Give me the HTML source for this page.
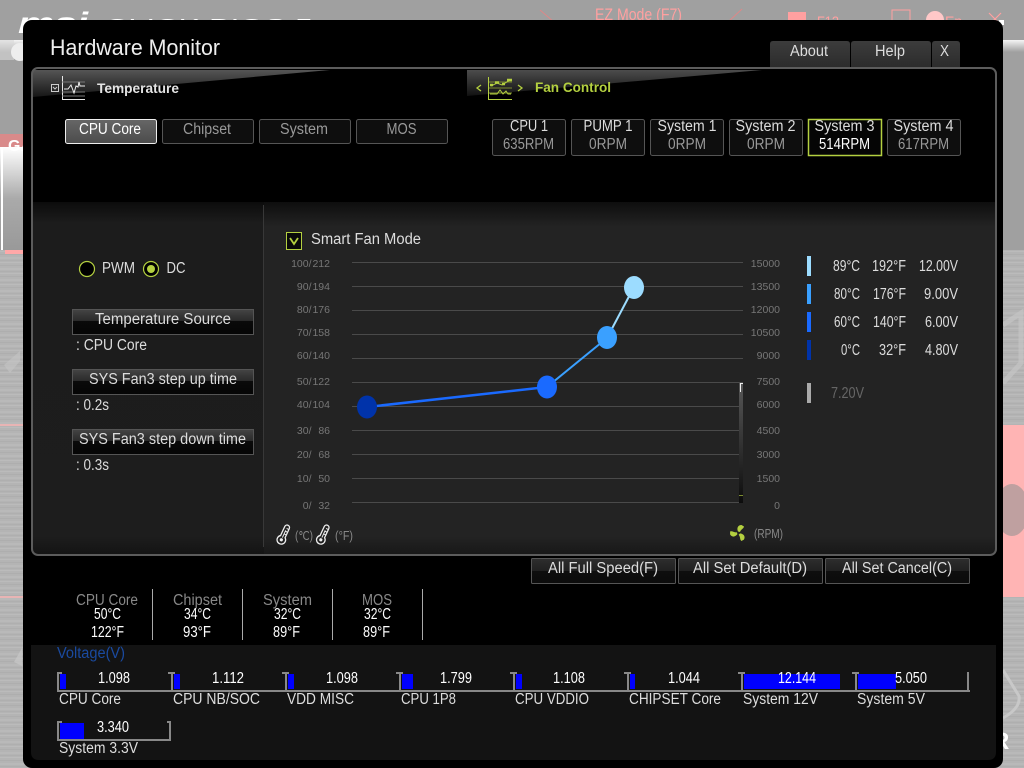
<!DOCTYPE html>
<html lang="en"><head><meta charset="utf-8"><title>Hardware Monitor</title>
<style>
html,body{margin:0;padding:0;width:1024px;height:768px;overflow:hidden;background:#a0a0a0}
svg{display:block}
text{font-family:"Liberation Sans",sans-serif;font-size:15.5px;fill:#ddd}
.g{fill:#999}.w{fill:#fff}.a{font-size:10.5px;fill:#777;text-anchor:end}
.leg{font-size:16px;fill:#ddd}
</style></head><body>
<svg xmlns="http://www.w3.org/2000/svg" width="1024" height="768" viewBox="0 0 1024 768">
<defs>
<linearGradient id="band" x1="0" y1="0" x2="0" y2="1"><stop offset="0" stop-color="#f4f4f4"/><stop offset="1" stop-color="#a0a0a0"/></linearGradient>
<linearGradient id="box" x1="0" y1="0" x2="0" y2="1"><stop offset="0" stop-color="#fff"/><stop offset=".5" stop-color="#aaa"/><stop offset="1" stop-color="#999"/></linearGradient>
<pattern id="st" width="8" height="11" patternUnits="userSpaceOnUse"><rect width="8" height="11" fill="#b4b4b4"/><rect y="1" width="8" height="1" fill="#aeaeae"/><rect y="4" width="8" height="2" fill="#b9b9b9"/><rect y="7" width="8" height="1" fill="#afafaf"/><rect y="9" width="8" height="1" fill="#bbb"/></pattern>
<linearGradient id="wedge" x1="0" y1="0" x2="0" y2="1"><stop offset="0" stop-color="#555"/><stop offset="1" stop-color="#161616"/></linearGradient>
<linearGradient id="wedge2" x1="0" y1="0" x2="0" y2="1"><stop offset="0" stop-color="#4c4c4c"/><stop offset="1" stop-color="#111"/></linearGradient>
<linearGradient id="sel" x1="0" y1="0" x2="0" y2="1"><stop offset="0" stop-color="#666"/><stop offset="1" stop-color="#4c4c4c"/></linearGradient>
<linearGradient id="tab" x1="0" y1="0" x2="0" y2="1"><stop offset="0" stop-color="#3c3c3c"/><stop offset="1" stop-color="#2c2c2c"/></linearGradient>
<linearGradient id="btn" x1="0" y1="0" x2="0" y2="1"><stop offset="0" stop-color="#444"/><stop offset=".46" stop-color="#2a2a2a"/><stop offset=".47" stop-color="#0a0a0a"/><stop offset="1" stop-color="#050505"/></linearGradient>
<linearGradient id="btn2" x1="0" y1="0" x2="0" y2="1"><stop offset="0" stop-color="#2e2e2e"/><stop offset=".5" stop-color="#202020"/><stop offset=".51" stop-color="#0e0e0e"/><stop offset="1" stop-color="#0b0b0b"/></linearGradient>
<linearGradient id="lp" x1="0" y1="0" x2="0" y2="1"><stop offset="0" stop-color="#0c0c0c"/><stop offset=".06" stop-color="#1c1c1c"/><stop offset=".95" stop-color="#1d1d1d"/><stop offset="1" stop-color="#141414"/></linearGradient>
<linearGradient id="rp" x1="0" y1="0" x2="0" y2="1"><stop offset="0" stop-color="#0e0e0e"/><stop offset=".07" stop-color="#232323"/><stop offset=".95" stop-color="#232323"/><stop offset="1" stop-color="#181818"/></linearGradient>
<linearGradient id="sl" x1="0" y1="0" x2="0" y2="1"><stop offset="0" stop-color="#585858"/><stop offset=".5" stop-color="#333"/><stop offset="1" stop-color="#0c0c0c"/></linearGradient>
</defs>

<!-- background -->
<rect width="1024" height="768" fill="#a0a0a0"/>
<rect y="40" width="1024" height="12" fill="url(#band)"/>
<rect y="250" width="1024" height="518" fill="url(#st)"/>
<rect y="134" width="23" height="13" fill="#d98a8a"/>
<rect y="147" width="23" height="103" fill="url(#box)"/>
<rect y="147" x="1" width="2" height="103" fill="#fff"/>
<rect x="5" y="250" width="18" height="4" fill="#ffa8a8"/>
<rect y="424" width="23" height="2" fill="#e8b4b4"/>
<rect y="596" width="23" height="2" fill="#e8b4b4"/>
<path d="M4 365l16-14v10l-10 12z" fill="#c4c4c4" opacity=".6"/>
<path d="M14 662l8-14v18z" fill="#c8c8c8" opacity=".7"/>
<text x="8" y="151" style="font-size:16px;font-weight:bold;fill:#fff">GA</text>
<rect x="1003" y="425" width="21" height="172" fill="#ffb4b4"/>
<ellipse cx="1012" cy="510" rx="17" ry="26" fill="#a99" opacity=".75"/>
<path d="M1003 325l18-12v50l-18 20" stroke="#c4c4c4" stroke-width="5" fill="none" opacity=".7"/>
<path d="M1003 670l16 26q2 12-16 22" stroke="#c8c8c8" stroke-width="3" fill="none"/>
<text x="992" y="749" style="font-size:24px;font-weight:bold;fill:#fff">R</text>
<rect x="0" y="40" width="14" height="20" fill="#d8d8d8" opacity=".6"/>
<circle cx="20" cy="52" r="9" fill="#eee"/>

<!-- top header, clipped by the dialog -->
<text x="18" y="33" textLength="70" lengthAdjust="spacingAndGlyphs" style="font-size:30px;font-weight:bold;font-style:italic;fill:#fff">msi</text>
<text x="105" y="33" textLength="208" lengthAdjust="spacingAndGlyphs" style="font-size:20px;fill:#fff">CLICK BIOS 5</text>
<text x="595" y="20" textLength="87" lengthAdjust="spacingAndGlyphs" style="font-size:17px;fill:#ffa0a0">EZ Mode (F7)</text>
<path d="M540 10l14 12M742 9l-14 13" stroke="#d88" stroke-width="1" fill="none"/>
<rect x="788" y="12" width="18" height="10" fill="#ffa0a0"/>
<text x="817" y="26" textLength="22" lengthAdjust="spacingAndGlyphs" style="font-size:14px;fill:#ffa0a0">F12</text>
<rect x="892" y="10" width="18" height="12" fill="none" stroke="#ffa0a0"/>
<circle cx="935" cy="20" r="9" fill="#ffc8c8"/>
<text x="945" y="26" style="font-size:14px;fill:#ffa0a0">En</text>
<path d="M989 13l12 12M1001 13l-12 12" stroke="#ffa0a0" stroke-width="1.2"/>

<!-- dialog -->
<rect x="999" y="20" width="5" height="5" fill="#fff"/>
<rect x="23" y="20" width="980" height="748" rx="9" fill="#000"/>
<text x="50" y="55" textLength="170" lengthAdjust="spacingAndGlyphs" style="font-size:22px;fill:#eee">Hardware Monitor</text>

<!-- tabs -->
<path d="M770 67V44q0-3 3-3h74q3 0 3 3v23z" fill="url(#tab)"/>
<path d="M851 67V44q0-3 3-3h74q3 0 3 3v23z" fill="url(#tab)"/>
<path d="M932 67V44q0-3 3-3h22q3 0 3 3v23z" fill="url(#tab)"/>
<text x="790" y="56" textLength="38" lengthAdjust="spacingAndGlyphs">About</text>
<text x="875" y="56" textLength="30" lengthAdjust="spacingAndGlyphs">Help</text>
<text x="940" y="56" textLength="9" lengthAdjust="spacingAndGlyphs">X</text>

<!-- lower panel fills -->
<rect x="33" y="202" width="231" height="352" fill="url(#lp)"/>
<rect x="264" y="202" width="731" height="352" fill="url(#rp)"/>
<rect x="263" y="205" width="1" height="342" fill="#383838"/>

<!-- header wedges -->
<polygon points="33,70 330,70 33,97" fill="url(#wedge)"/>
<polygon points="467,70 762,70 467,96" fill="url(#wedge2)"/>

<!-- panel border -->
<rect x="32" y="68" width="964" height="487" rx="6" fill="none" stroke="#5c5c5c" stroke-width="2"/>

<!-- temperature tab -->
<rect x="51.500" y="84.500" width="7" height="7" fill="none" stroke="#ccc"/>
<path d="M53 87l2 2 2-2" stroke="#ccc" fill="none"/>
<path d="M62.500 76v23.500H85" stroke="#e8e8e8" fill="none"/>
<path d="M62 82h23M62 92h23M62 96h23" stroke="#777" fill="none"/>
<path d="M64 89h4l3-4 3 8 2-7 2 1 1-5 1 4h5" stroke="#eee" stroke-width="1" fill="none"/>
<text x="97" y="93" textLength="82" lengthAdjust="spacingAndGlyphs" style="font-size:14px;font-weight:bold;fill:#e4e4e4">Temperature</text>

<!-- fan tab -->
<path d="M481 85l-4 3 4 3" stroke="#b4d040" stroke-width="1.300" fill="none"/>
<path d="M488.500 77V99.500H512" stroke="#b4d040" fill="none"/>
<path d="M489 82h23M489 88h23M489 93h23" stroke="#7c8c30" fill="none"/>
<path d="M490 85h3M495 82.500h4M502 84h3M507 80h5" stroke="#b4d040" stroke-width="2.500" fill="none"/>
<path d="M491 86l6-3 5 2 8-5" stroke="#b4d040" stroke-width="1" fill="none"/>
<path d="M490 94h7l3-4 3 4 3-3 2 3h3" stroke="#b4d040" fill="none"/>
<path d="M518 85l4 3-4 3" stroke="#b4d040" stroke-width="1.300" fill="none"/>
<text x="535" y="92" textLength="76" lengthAdjust="spacingAndGlyphs" style="font-size:14px;font-weight:bold;fill:#b4d040">Fan Control</text>

<!-- sensor buttons -->
<rect x="65.500" y="119.500" width="91" height="24" rx="2" fill="url(#sel)" stroke="#eee"/>
<rect x="162.500" y="119.500" width="91" height="24" rx="2" fill="#0e0e0e" stroke="#555"/>
<rect x="259.500" y="119.500" width="91" height="24" rx="2" fill="#0e0e0e" stroke="#555"/>
<rect x="356.500" y="119.500" width="91" height="24" rx="2" fill="#0e0e0e" stroke="#555"/>
<text x="79" y="134" textLength="62" lengthAdjust="spacingAndGlyphs" class="w">CPU Core</text>
<text x="183" y="134" textLength="48" lengthAdjust="spacingAndGlyphs" class="g">Chipset</text>
<text x="280" y="134" textLength="48" lengthAdjust="spacingAndGlyphs" class="g">System</text>
<text x="386.500" y="134" textLength="30" lengthAdjust="spacingAndGlyphs" class="g">MOS</text>

<!-- fan buttons -->
<g fill="#0e0e0e" stroke="#555">
<rect x="492.500" y="119.500" width="73" height="36" rx="2"/>
<rect x="571.500" y="119.500" width="73" height="36" rx="2"/>
<rect x="650.500" y="119.500" width="73" height="36" rx="2"/>
<rect x="729.500" y="119.500" width="73" height="36" rx="2"/>
<rect x="887.500" y="119.500" width="73" height="36" rx="2"/>
</g>
<rect x="808.500" y="119.500" width="73" height="36" fill="#050505" stroke="#b4d040" stroke-width="1.500"/>
<text x="510" y="131" textLength="38" lengthAdjust="spacingAndGlyphs">CPU 1</text>
<text x="583.500" y="131" textLength="49" lengthAdjust="spacingAndGlyphs">PUMP 1</text>
<text x="657.500" y="131" textLength="59" lengthAdjust="spacingAndGlyphs">System 1</text>
<text x="735.500" y="131" textLength="60" lengthAdjust="spacingAndGlyphs">System 2</text>
<text x="814.500" y="131" textLength="60" lengthAdjust="spacingAndGlyphs">System 3</text>
<text x="893.500" y="131" textLength="60" lengthAdjust="spacingAndGlyphs">System 4</text>
<text x="503" y="149" textLength="51" lengthAdjust="spacingAndGlyphs" class="g">635RPM</text>
<text x="589" y="149" textLength="38" lengthAdjust="spacingAndGlyphs" class="g">0RPM</text>
<text x="668" y="149" textLength="38" lengthAdjust="spacingAndGlyphs" class="g">0RPM</text>
<text x="747" y="149" textLength="38" lengthAdjust="spacingAndGlyphs" class="g">0RPM</text>
<text x="819" y="149" textLength="51" lengthAdjust="spacingAndGlyphs" class="w">514RPM</text>
<text x="898" y="149" textLength="51" lengthAdjust="spacingAndGlyphs" class="g">617RPM</text>

<!-- left controls -->
<circle cx="87" cy="269" r="7.500" fill="#000" stroke="#b4d040" stroke-width="1.200"/>
<circle cx="151" cy="269" r="7.500" fill="#000" stroke="#b4d040" stroke-width="1.200"/>
<circle cx="151" cy="269" r="4" fill="#b4d040"/>
<text x="102" y="273" textLength="33" lengthAdjust="spacingAndGlyphs">PWM</text>
<text x="166.500" y="273" textLength="19" lengthAdjust="spacingAndGlyphs">DC</text>

<rect x="72.500" y="309.500" width="181" height="25" fill="url(#btn)" stroke="#555"/>
<text x="95" y="324" textLength="136" lengthAdjust="spacingAndGlyphs">Temperature Source</text>
<text x="76" y="350" textLength="71" lengthAdjust="spacingAndGlyphs">: CPU Core</text>
<rect x="72.500" y="369.500" width="181" height="25" fill="url(#btn)" stroke="#555"/>
<text x="89" y="384" textLength="148" lengthAdjust="spacingAndGlyphs">SYS Fan3 step up time</text>
<text x="76" y="410" textLength="33" lengthAdjust="spacingAndGlyphs">: 0.2s</text>
<rect x="72.500" y="429.500" width="181" height="25" fill="url(#btn)" stroke="#555"/>
<text x="79" y="444" textLength="167" lengthAdjust="spacingAndGlyphs">SYS Fan3 step down time</text>
<text x="76" y="470" textLength="33" lengthAdjust="spacingAndGlyphs">: 0.3s</text>

<!-- smart fan -->
<rect x="286.500" y="232.500" width="15" height="17" fill="#0a0a0a" stroke="#b4d040"/>
<path d="M290 238l4 6 4-6" stroke="#b4d040" stroke-width="1.800" fill="none"/>
<text x="311" y="244" textLength="110" lengthAdjust="spacingAndGlyphs">Smart Fan Mode</text>

<!-- grid -->
<g stroke="#4a4a4a" stroke-width="1">
<path d="M352 262.500H743M352 286.500H743M352 310.500H743M352 334.500H743M352 358.500H743M352 382.500H743M352 406.500H743M352 430.500H743M352 454.500H743M352 478.500H743M352 502.500H743"/>
</g>

<!-- left axis -->
<text class="a" x="311.500" y="267">100/</text><text class="a" x="330" y="267">212</text>
<text class="a" x="311.500" y="290">90/</text><text class="a" x="330" y="290">194</text>
<text class="a" x="311.500" y="313">80/</text><text class="a" x="330" y="313">176</text>
<text class="a" x="311.500" y="336">70/</text><text class="a" x="330" y="336">158</text>
<text class="a" x="311.500" y="359">60/</text><text class="a" x="330" y="359">140</text>
<text class="a" x="311.500" y="385">50/</text><text class="a" x="330" y="385">122</text>
<text class="a" x="311.500" y="408">40/</text><text class="a" x="330" y="408">104</text>
<text class="a" x="311.500" y="434">30/</text><text class="a" x="330" y="434">86</text>
<text class="a" x="311.500" y="458">20/</text><text class="a" x="330" y="458">68</text>
<text class="a" x="311.500" y="482">10/</text><text class="a" x="330" y="482">50</text>
<text class="a" x="311.500" y="509">0/</text><text class="a" x="330" y="509">32</text>

<!-- right axis -->
<text class="a" x="780" y="267">15000</text>
<text class="a" x="780" y="290">13500</text>
<text class="a" x="780" y="313">12000</text>
<text class="a" x="780" y="336">10500</text>
<text class="a" x="780" y="359">9000</text>
<text class="a" x="780" y="385">7500</text>
<text class="a" x="780" y="408">6000</text>
<text class="a" x="780" y="434">4500</text>
<text class="a" x="780" y="458">3000</text>
<text class="a" x="780" y="482">1500</text>
<text class="a" x="780" y="509">0</text>

<!-- mini slider -->
<rect x="739" y="383" width="4" height="120" fill="url(#sl)"/>
<rect x="739" y="495" width="4" height="1" fill="#7c8c30"/>
<path d="M740.500 392V383.500H743" stroke="#eee" fill="none"/>

<!-- curve -->
<path d="M367 407L547 387" stroke="#1a6aff" stroke-width="2.500" fill="none"/>
<path d="M547 387L607 338" stroke="#3aa0ff" stroke-width="2" fill="none"/>
<path d="M607 338L634 287" stroke="#9cdcff" stroke-width="2" fill="none"/>
<ellipse cx="367" cy="407" rx="10" ry="11.500" fill="#0033aa"/>
<ellipse cx="547" cy="387" rx="10" ry="11.500" fill="#1a6aff"/>
<ellipse cx="607" cy="337.500" rx="10" ry="11.500" fill="#3aa0ff"/>
<ellipse cx="634" cy="287.500" rx="10" ry="11.500" fill="#9cdcff"/>

<!-- legend -->
<rect x="807" y="256" width="4" height="20" fill="#9cdcff"/>
<rect x="807" y="284" width="4" height="20" fill="#3aa0ff"/>
<rect x="807" y="312" width="4" height="20" fill="#1a6aff"/>
<rect x="807" y="340" width="4" height="20" fill="#0033aa"/>
<rect x="807" y="383" width="4" height="20" fill="#aaa"/>
<text class="leg" x="833" y="271" textLength="27" lengthAdjust="spacingAndGlyphs">89°C</text>
<text class="leg" x="872" y="271" textLength="34" lengthAdjust="spacingAndGlyphs">192°F</text>
<text class="leg" x="919" y="271" textLength="39" lengthAdjust="spacingAndGlyphs">12.00V</text>
<text class="leg" x="834" y="299" textLength="26" lengthAdjust="spacingAndGlyphs">80°C</text>
<text class="leg" x="873" y="299" textLength="33" lengthAdjust="spacingAndGlyphs">176°F</text>
<text class="leg" x="924" y="299" textLength="34" lengthAdjust="spacingAndGlyphs">9.00V</text>
<text class="leg" x="834" y="327" textLength="26" lengthAdjust="spacingAndGlyphs">60°C</text>
<text class="leg" x="873" y="327" textLength="33" lengthAdjust="spacingAndGlyphs">140°F</text>
<text class="leg" x="925" y="327" textLength="33" lengthAdjust="spacingAndGlyphs">6.00V</text>
<text class="leg" x="841" y="355" textLength="19" lengthAdjust="spacingAndGlyphs">0°C</text>
<text class="leg" x="879" y="355" textLength="27" lengthAdjust="spacingAndGlyphs">32°F</text>
<text class="leg" x="925" y="355" textLength="33" lengthAdjust="spacingAndGlyphs">4.80V</text>
<text class="leg" x="831" y="398" textLength="33" lengthAdjust="spacingAndGlyphs" style="fill:#666">7.20V</text>

<!-- thermometers and fan -->
<g fill="none" stroke="#eee" stroke-width="1.300">
<g transform="translate(284.500 533) rotate(25)"><path d="M-2.500 4V-6a2.500 2.500 0 0 1 5 0V4a4.300 4.300 0 1 1-5 0z"/><circle cy="7.500" r="1.600" fill="#eee" stroke="none"/><path d="M0 5V-3M0 -5h2.500M0 -2h2.500M0 1h2.500" stroke-width="1"/></g>
<g transform="translate(324 533) rotate(25)"><path d="M-2.500 4V-6a2.500 2.500 0 0 1 5 0V4a4.300 4.300 0 1 1-5 0z"/><circle cy="7.500" r="1.600" fill="#eee" stroke="none"/><path d="M0 5V-3M0 -5h2.500M0 -2h2.500M0 1h2.500" stroke-width="1"/></g>
</g>
<text x="295" y="540" textLength="18" lengthAdjust="spacingAndGlyphs" style="font-size:12.500px;fill:#888">(℃)</text>
<text x="335" y="540" textLength="18" lengthAdjust="spacingAndGlyphs" style="font-size:12.500px;fill:#888">(°F)</text>
<g fill="#b4d040" transform="translate(738.500 533)">
<path id="blade" d="M-.5-1.500C-2-5-.5-8 3-8L5.500-6.500C5-4 2.500-4 1.500-1z"/>
<path transform="rotate(120)" d="M-.5-1.500C-2-5-.5-8 3-8L5.500-6.500C5-4 2.500-4 1.500-1z"/>
<path transform="rotate(240)" d="M-.5-1.500C-2-5-.5-8 3-8L5.500-6.500C5-4 2.500-4 1.500-1z"/>
</g>
<text x="754" y="538" textLength="29" lengthAdjust="spacingAndGlyphs" style="font-size:12.500px;fill:#888">(RPM)</text>

<!-- all buttons -->
<rect x="531.500" y="558.500" width="144" height="25" rx="1" fill="url(#btn2)" stroke="#555"/>
<rect x="678.500" y="558.500" width="144" height="25" rx="1" fill="url(#btn2)" stroke="#555"/>
<rect x="825.500" y="558.500" width="144" height="25" rx="1" fill="url(#btn2)" stroke="#555"/>
<text x="548" y="573" textLength="110" lengthAdjust="spacingAndGlyphs">All Full Speed(F)</text>
<text x="693" y="573" textLength="114" lengthAdjust="spacingAndGlyphs">All Set Default(D)</text>
<text x="842" y="573" textLength="110" lengthAdjust="spacingAndGlyphs">All Set Cancel(C)</text>

<!-- temperature summary -->
<path d="M152.500 589V640M242.500 589V640M332.500 589V640M422.500 589V640" stroke="#aaa"/>
<text x="76" y="605" textLength="62" lengthAdjust="spacingAndGlyphs" style="fill:#888">CPU Core</text>
<text x="173" y="605" textLength="49" lengthAdjust="spacingAndGlyphs" style="fill:#888">Chipset</text>
<text x="263" y="605" textLength="49" lengthAdjust="spacingAndGlyphs" style="fill:#888">System</text>
<text x="362" y="605" textLength="30" lengthAdjust="spacingAndGlyphs" style="fill:#888">MOS</text>
<text x="94" y="619" textLength="27" lengthAdjust="spacingAndGlyphs" class="w">50°C</text>
<text x="184" y="619" textLength="27" lengthAdjust="spacingAndGlyphs" class="w">34°C</text>
<text x="274" y="619" textLength="27" lengthAdjust="spacingAndGlyphs" class="w">32°C</text>
<text x="364" y="619" textLength="27" lengthAdjust="spacingAndGlyphs" class="w">32°C</text>
<text x="91" y="637" textLength="33" lengthAdjust="spacingAndGlyphs" class="w">122°F</text>
<text x="183" y="637" textLength="28" lengthAdjust="spacingAndGlyphs" class="w">93°F</text>
<text x="273" y="637" textLength="27" lengthAdjust="spacingAndGlyphs" class="w">89°F</text>
<text x="363" y="637" textLength="27" lengthAdjust="spacingAndGlyphs" class="w">89°F</text>

<!-- voltage panel -->
<path d="M31 645H996V752q0 8-8 8H39q-8 0-8-8z" fill="#131313"/>
<text x="57" y="658" textLength="68" lengthAdjust="spacingAndGlyphs" style="fill:#1a4aa0">Voltage(V)</text>

<g fill="#0000ff">
<rect x="60" y="674" width="6" height="15"/>
<rect x="174" y="674" width="6" height="15"/>
<rect x="288" y="674" width="6" height="15"/>
<rect x="402" y="674" width="11" height="15"/>
<rect x="516" y="674" width="6" height="15"/>
<rect x="630" y="674" width="5" height="15"/>
<rect x="744" y="674" width="96" height="15"/>
<rect x="858" y="674" width="38" height="15"/>
<rect x="60" y="723" width="24" height="17"/>
</g>
<g fill="#888">
<rect x="57" y="690" width="913" height="2"/>
<rect x="57" y="672" width="2" height="20"/><rect x="57" y="672" width="5" height="2"/>
<rect x="171" y="672" width="2" height="20"/><rect x="168" y="672" width="7" height="2"/>
<rect x="285" y="672" width="2" height="20"/><rect x="282" y="672" width="7" height="2"/>
<rect x="399" y="672" width="2" height="20"/><rect x="396" y="672" width="7" height="2"/>
<rect x="513" y="672" width="2" height="20"/><rect x="510" y="672" width="7" height="2"/>
<rect x="627" y="672" width="2" height="20"/><rect x="624" y="672" width="7" height="2"/>
<rect x="741" y="672" width="2" height="20"/><rect x="738" y="672" width="7" height="2"/>
<rect x="855" y="672" width="2" height="20"/><rect x="852" y="672" width="7" height="2"/>
<rect x="967" y="672" width="2" height="20"/>
<rect x="57" y="739" width="114" height="2"/>
<rect x="57" y="721" width="2" height="20"/><rect x="57" y="721" width="5" height="2"/>
<rect x="169" y="721" width="2" height="20"/><rect x="167" y="721" width="4" height="2"/>
</g>
<text x="98" y="683" textLength="32" lengthAdjust="spacingAndGlyphs" class="w">1.098</text>
<text x="212" y="683" textLength="32" lengthAdjust="spacingAndGlyphs" class="w">1.112</text>
<text x="326" y="683" textLength="32" lengthAdjust="spacingAndGlyphs" class="w">1.098</text>
<text x="440" y="683" textLength="32" lengthAdjust="spacingAndGlyphs" class="w">1.799</text>
<text x="553" y="683" textLength="32" lengthAdjust="spacingAndGlyphs" class="w">1.108</text>
<text x="668" y="683" textLength="32" lengthAdjust="spacingAndGlyphs" class="w">1.044</text>
<text x="778" y="683" textLength="38" lengthAdjust="spacingAndGlyphs" class="w">12.144</text>
<text x="895" y="683" textLength="32" lengthAdjust="spacingAndGlyphs" class="w">5.050</text>
<text x="97" y="732" textLength="32" lengthAdjust="spacingAndGlyphs" class="w">3.340</text>
<text x="59" y="704" textLength="62" lengthAdjust="spacingAndGlyphs">CPU Core</text>
<text x="173" y="704" textLength="87" lengthAdjust="spacingAndGlyphs">CPU NB/SOC</text>
<text x="287" y="704" textLength="67" lengthAdjust="spacingAndGlyphs">VDD MISC</text>
<text x="401" y="704" textLength="55" lengthAdjust="spacingAndGlyphs">CPU 1P8</text>
<text x="515" y="704" textLength="74" lengthAdjust="spacingAndGlyphs">CPU VDDIO</text>
<text x="629" y="704" textLength="92" lengthAdjust="spacingAndGlyphs">CHIPSET Core</text>
<text x="743" y="704" textLength="75" lengthAdjust="spacingAndGlyphs">System 12V</text>
<text x="857" y="704" textLength="68" lengthAdjust="spacingAndGlyphs">System 5V</text>
<text x="59" y="753" textLength="79" lengthAdjust="spacingAndGlyphs">System 3.3V</text>
</svg>
</body></html>
